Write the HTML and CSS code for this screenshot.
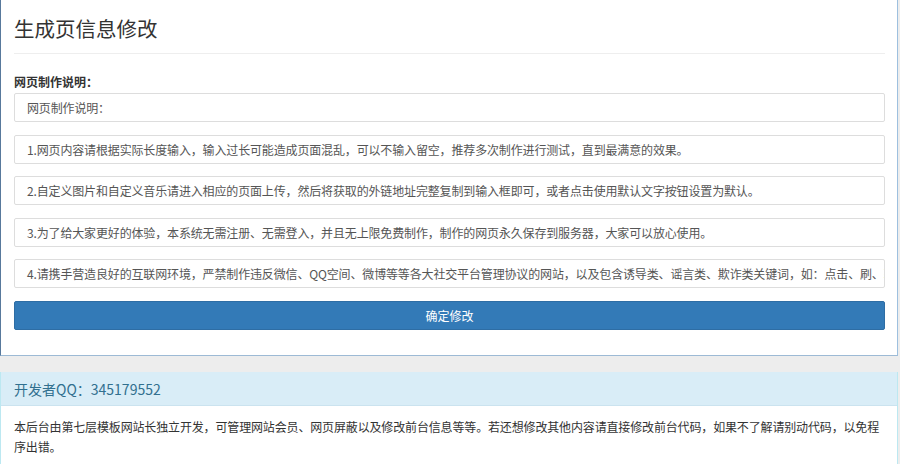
FILE: index.html
```html
<!DOCTYPE html>
<html lang="zh-CN">
<head>
<meta charset="utf-8">
<title>生成页信息修改</title>
<link rel="stylesheet" href="styles.css">
</head>
<body>
<div class="page">
  <div class="panel-main">
    <h1 class="title">生成页信息修改</h1>
    <div class="divider"></div>
    <div class="label">网页制作说明：</div>
    <div class="field">网页制作说明：</div>
    <div class="field">1.网页内容请根据实际长度输入，输入过长可能造成页面混乱，可以不输入留空，推荐多次制作进行测试，直到最满意的效果。</div>
    <div class="field">2.自定义图片和自定义音乐请进入相应的页面上传，然后将获取的外链地址完整复制到输入框即可，或者点击使用默认文字按钮设置为默认。</div>
    <div class="field">3.为了给大家更好的体验，本系统无需注册、无需登入，并且无上限免费制作，制作的网页永久保存到服务器，大家可以放心使用。</div>
    <div class="field">4.请携手营造良好的互联网环境，严禁制作违反微信、QQ空间、微博等等各大社交平台管理协议的网站，以及包含诱导类、谣言类、欺诈类关键词，如：点击、刷、转发、分享等等，违者后果自负。</div>
    <button class="btn">确定修改</button>
  </div>
  <div class="panel-info">
    <div class="info-head">开发者QQ：345179552</div>
    <div class="info-body">本后台由第七层模板网站长独立开发，可管理网站会员、网页屏蔽以及修改前台信息等等。若还想修改其他内容请直接修改前台代码，如果不了解请别动代码，以免程序出错。</div>
  </div>
</div>
</body>
</html>
```

FILE: styles.css
```css
* { box-sizing: border-box; }
html, body { margin: 0; padding: 0; }
body {
  background: #ededed;
  font-family: "Noto Sans CJK SC", "Noto Sans", sans-serif;
  color: #333;
  font-size: 12px;
  width: 900px;
  height: 464px;
  overflow: hidden;
}
.page { width: 900px; }
.panel-main {
  width: 898px;
  background: #fff;
  border-left: 1px solid #58799c;
  border-right: 1px solid #9dc0df;
  border-bottom: 1px solid #9dbad5;
  padding: 16px 12px 25px 13px;
}
.title {
  margin: 0;
  font-size: 20.5px;
  line-height: 24px;
  font-weight: normal;
  color: #333;
}
.divider {
  margin-top: 13px;
  border-top: 1px solid #eee;
}
.label {
  margin-top: 19px;
  font-weight: bold;
  line-height: 17px;
  color: #333;
}
.field {
  margin-top: 3px;
  height: 29px;
  line-height: 27px;
  padding: 0 12px;
  border: 1px solid #ddd;
  border-radius: 2px;
  color: #555;
  letter-spacing: -0.15px;
  white-space: nowrap;
  overflow: hidden;
  background: #fff;
}
.field + .field { margin-top: 12.5px; }
.btn {
  display: block;
  width: 100%;
  margin-top: 12.5px;
  height: 29px;
  border: 1px solid #2e6da4;
  background: #337ab7;
  color: #fff;
  font-family: inherit;
  font-size: 12px;
  border-radius: 2px;
  padding: 0;
}
.panel-info {
  margin-top: 16px;
  width: 898px;
  background: #fff;
  border-left: 1px solid #bce8f1;
  border-right: 1px solid #bce8f1;
}
.info-head {
  background: #d9edf7;
  color: #31708f;
  font-size: 14px;
  height: 34px;
  line-height: 34px;
  padding-left: 13px;
  border-bottom: 1px solid #cbe3ef;
}
.info-body {
  padding: 11px 14px 10px 13px;
  line-height: 20px;
  letter-spacing: -0.15px;
  color: #333;
}
```
